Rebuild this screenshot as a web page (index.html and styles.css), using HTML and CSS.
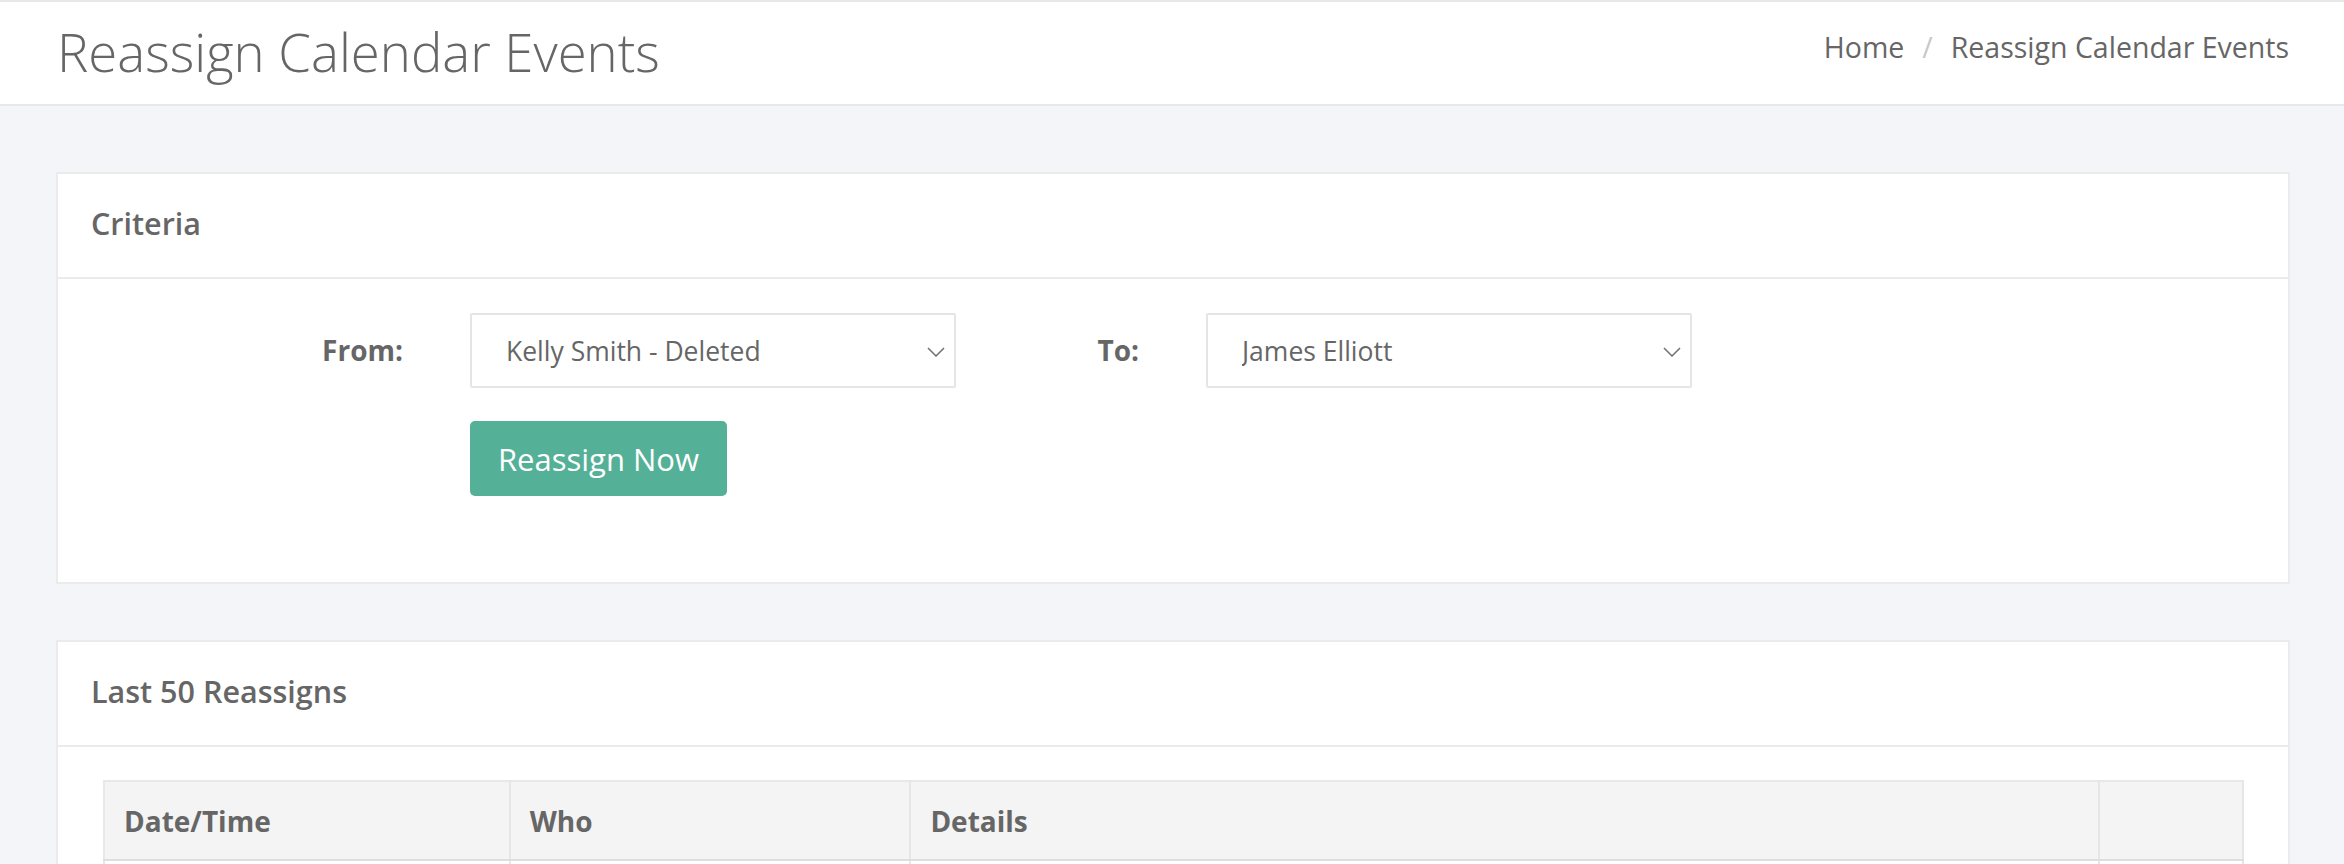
FILE: index.html
```html
<!DOCTYPE html>
<html lang="en">
<head>
<meta charset="utf-8">
<title>Reassign Calendar Events</title>
<link rel="stylesheet" href="styles.css">
</head>
<body>
<header class="topbar">
  <h1 class="page-title">Reassign Calendar Events</h1>
  <nav class="crumbs"><span class="crumb">Home</span><span class="sep">/</span><span class="crumb">Reassign Calendar Events</span></nav>
</header>
<main class="content">
  <section class="card">
    <div class="card-head"><h2 class="card-title">Criteria</h2></div>
    <div class="card-body criteria">
      <div class="form-grid">
        <label class="lbl" for="from">From:</label>
        <div class="sel">
          <select id="from"><option>Kelly Smith - Deleted</option></select>
          <svg class="chev" width="18" height="10" viewBox="0 0 18 10"><polyline points="1,1 9,9 17,1" fill="none" stroke="#6f6f6f" stroke-width="1.5"/></svg>
        </div>
        <label class="lbl" for="to">To:</label>
        <div class="sel">
          <select id="to"><option>James Elliott</option></select>
          <svg class="chev" width="18" height="10" viewBox="0 0 18 10"><polyline points="1,1 9,9 17,1" fill="none" stroke="#6f6f6f" stroke-width="1.5"/></svg>
        </div>
        <div class="spacer"></div>
        <div class="actions"><button class="btn" type="button">Reassign Now</button></div>
      </div>
    </div>
  </section>
  <section class="card">
    <div class="card-head"><h2 class="card-title">Last 50 Reassigns</h2></div>
    <div class="card-body history">
      <table class="log">
        <thead>
          <tr>
            <th class="c-date">Date/Time</th>
            <th class="c-who">Who</th>
            <th class="c-details">Details</th>
            <th class="c-extra"></th>
          </tr>
        </thead>
        <tbody>
          <tr><td>&nbsp;</td><td>&nbsp;</td><td>&nbsp;</td><td>&nbsp;</td></tr>
        </tbody>
      </table>
    </div>
  </section>
</main>
</body>
</html>
```
FILE: styles.css
```css
* { box-sizing: border-box; }
body {
  margin: 0;
  background: #f4f5f9;
  font-family: "Open Sans", "Noto Sans", "Liberation Sans", sans-serif;
  color: #666;
}
.topbar {
  box-sizing: content-box;
  height: 102px;
  background: #fff;
  border-top: 2px solid #e8e8e8;
  border-bottom: 2px solid #e6e8ec;
  display: flex;
  justify-content: space-between;
  align-items: flex-start;
  padding: 0 55px 0 57px;
}
.page-title {
  margin: 18px 0 0;
  font-size: 52.7px;
  font-weight: 300;
  line-height: 1.2;
  color: #666;
}
.crumbs {
  margin-top: 28px;
  font-size: 28.5px;
  line-height: 1.2;
  color: #666;
  display: flex;
}
.sep {
  color: #c8c8c8;
  padding: 0 18px;
}
.content {
  padding: 66px 54px 0 56px;
}
.card {
  background: #fff;
  border: 2px solid #ebebeb;
  margin-bottom: 56px;
}
.card-head {
  height: 105px;
  display: flex;
  align-items: center;
  padding: 0 33px 4px;
  border-bottom: 2px solid #ebebeb;
}
.card-title {
  margin: 0;
  font-size: 30.5px;
  font-weight: 600;
  line-height: 1.2;
  color: #666;
}
.criteria {
  padding: 34px 33px 86px;
}
.form-grid {
  display: grid;
  grid-template-columns: 312px 486px 116px 486px;
  column-gap: 67px;
  row-gap: 33px;
}
.lbl {
  align-self: center;
  text-align: right;
  font-size: 28px;
  font-weight: 700;
  line-height: 1.2;
  color: #666;
}
.sel {
  position: relative;
  height: 75px;
}
.sel select {
  appearance: none;
  -webkit-appearance: none;
  width: 100%;
  height: 75px;
  border: 2px solid #e5e5e5;
  border-radius: 2px;
  background: #fff;
  padding: 0 40px 0 34px;
  font-family: inherit;
  font-size: 26.5px;
  color: #666;
  outline: none;
}
.chev {
  position: absolute;
  right: 11px;
  top: 34px;
  pointer-events: none;
}
.actions {
  display: flex;
}
.btn {
  width: 257px;
  height: 75px;
  border: 0;
  border-radius: 5px;
  background: #54b096;
  color: #fff;
  font-family: inherit;
  font-size: 31px;
  padding: 0;
}
.history {
  padding: 33px 44px 0 45px;
}
.log {
  width: 100%;
  border-collapse: collapse;
  border: 2px solid #e8e8e8;
}
.log th {
  background: #f4f4f4;
  text-align: left;
  font-size: 28px;
  font-weight: 700;
  color: #666;
  height: 79px;
  padding: 0 19px;
  border-right: 2px solid #e6e6e6;
  border-bottom: 2px solid #dedede;
}
.log td {
  height: 72px;
  border-right: 2px solid #e6e6e6;
  border-bottom: 2px solid #e6e6e6;
}
.c-date { width: 406px; }
.c-who { width: 401px; }
.c-details { width: 1190px; }
.c-extra { width: 144px; }
```
